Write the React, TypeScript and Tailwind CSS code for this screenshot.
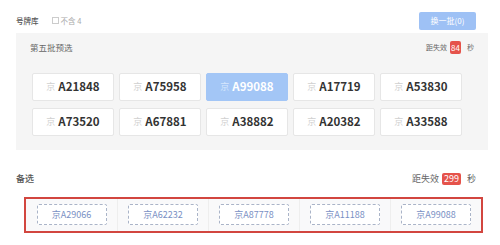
import React from 'react';

const font = { fontFamily: '"Noto Sans CJK SC", "Noto Sans", sans-serif' };

const preselect = [
  'A21848', 'A75958', 'A99088', 'A17719', 'A53830',
  'A73520', 'A67881', 'A38882', 'A20382', 'A33588',
];

const backups = ['京A29066', '京A62232', '京A87778', '京A11188', '京A99088'];

const Countdown: React.FC<{ value: number; small?: boolean }> = ({ value, small }) => (
  <div className={`flex items-center text-[#666] ${small ? 'text-[7px]' : 'text-[9px]'}`}>
    <span>距失效</span>
    <span
      className={`ml-[3px] rounded-[2px] bg-[#e5534b] text-center text-white ${
        small ? 'w-[11px] text-[8px] leading-[13px]' : 'w-[19px] text-[9px] leading-[12px]'
      }`}
    >
      {value}
    </span>
    <span className="ml-[6px]">秒</span>
  </div>
);

const App: React.FC = () => {
  return (
    <div className="h-[245px] w-[500px] bg-white" style={font}>
      <div className="flex h-[33px] items-center justify-between pl-[16px] pr-[24px] pt-[8px]">
        <div className="flex items-center">
          <span className="text-[7.5px] font-medium text-[#555]">号牌库</span>
          <span className="ml-[13px] h-[7px] w-[7px] border border-[#ccc] bg-white" />
          <span className="ml-[2px] text-[7.5px] text-[#aaa]">不含 4</span>
        </div>
        <button className="h-[18px] w-[57px] rounded-[2px] bg-[#9ec1f5] text-[8px] text-white">
          换一批(0)
        </button>
      </div>

      <div className="ml-[16px] mr-[12px] h-[117px] bg-[#f5f5f5] pl-[16px] pr-[26px]">
        <div className="flex h-[28px] items-center justify-between pt-[1px]">
          <span className="-ml-[2px] text-[8.5px] text-[#666]">第五批预选</span>
          <div className="-mr-[12px]">
            <Countdown value={84} small />
          </div>
        </div>
        <div className="mt-[12px] grid grid-cols-5 gap-x-[5px] gap-y-[7px]">
          {preselect.map((p, i) => {
            const active = i === 2;
            return (
              <div
                key={p}
                className={`flex h-[28px] items-center justify-center gap-[3px] rounded-[2px] border ${
                  active ? 'border-[#a3c6f6] bg-[#a3c6f6]' : 'border-[#e6e6e6] bg-white'
                }`}
              >
                <span className={`text-[9px] ${active ? 'text-[#d6e6fc]' : 'text-[#d0d0d0]'}`}>京</span>
                <span className={`text-[11.5px] font-semibold ${active ? 'text-white' : 'text-[#333]'}`}>{p}</span>
              </div>
            );
          })}
        </div>
      </div>

      <div className="mt-[22px] flex items-center justify-between pl-[16px] pr-[24px]">
        <span className="text-[9px] font-medium text-[#555]">备选</span>
        <Countdown value={299} />
      </div>

      <div className="ml-[24px] mt-[11px] grid h-[36px] w-[459px] grid-cols-5 border-2 border-[#d2463f] bg-[#f9f9fa]">
        {backups.map((b, i) => (
          <div
            key={b}
            className={`flex items-center justify-center ${i > 0 ? 'border-l border-[#eeeeee]' : ''}`}
          >
            <div className="flex h-[21px] w-[70px] items-center justify-center rounded-[2px] border border-dashed border-[#aab4c8] bg-white text-[9px] text-[#7990c4]">
              {b}
            </div>
          </div>
        ))}
      </div>
    </div>
  );
};

export default App;
